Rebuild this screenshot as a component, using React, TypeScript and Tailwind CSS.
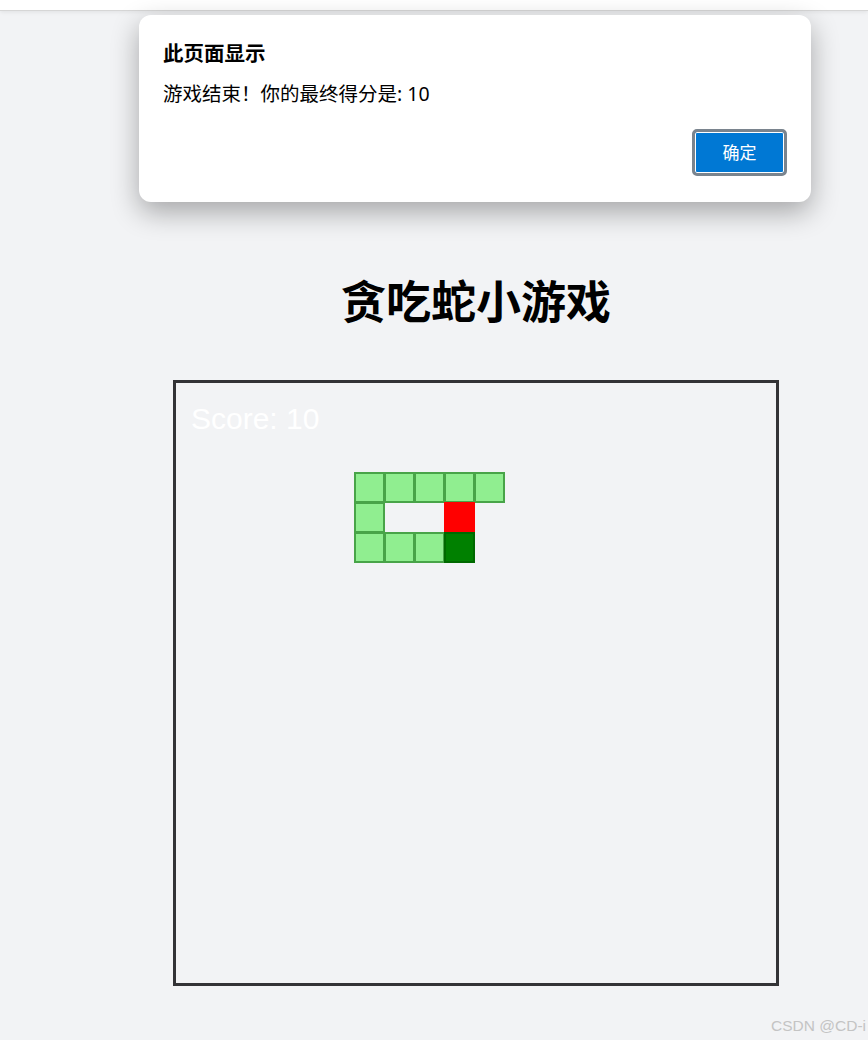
import React from "react";

type Cell = { x: number; y: number; kind: "body" | "head" | "food" };

const cells: Cell[] = [
  { x: 0, y: 0, kind: "body" },
  { x: 1, y: 0, kind: "body" },
  { x: 2, y: 0, kind: "body" },
  { x: 3, y: 0, kind: "body" },
  { x: 4, y: 0, kind: "body" },
  { x: 0, y: 1, kind: "body" },
  { x: 0, y: 2, kind: "body" },
  { x: 1, y: 2, kind: "body" },
  { x: 2, y: 2, kind: "body" },
  { x: 3, y: 1, kind: "food" },
  { x: 3, y: 2, kind: "head" },
];

export default function App() {
  return (
    <div
      className="relative h-[1040px] w-[868px] overflow-hidden bg-[#f2f3f5]"
      style={{ fontFamily: '"Noto Sans", "Noto Sans CJK SC", sans-serif' }}
    >
      {/* top browser strip */}
      <div className="h-[11px] bg-white border-b border-[#d6d6d6] shadow-[0_1px_4px_rgba(0,0,0,0.08)]" />

      {/* page content */}
      <div className="ml-[173px] flex w-[606px] flex-col items-center pt-[259px]">
        <h1
          className="text-[45px] font-bold leading-[60px] text-black"
          style={{ fontFamily: '"Noto Sans CJK SC", sans-serif' }}
        >
          贪吃蛇小游戏
        </h1>
        <div className="mt-[50px] h-[606px] w-[606px] border-[3px] border-[#333336]">
          <div className="relative h-full w-full">
            <div
              className="absolute left-[15px] top-[18px] text-[30px] leading-[36px] text-white"
              style={{ fontFamily: '"Liberation Sans", Arial, sans-serif' }}
            >
              Score: 10
            </div>
            {cells.map((c, i) => {
              const cls =
                c.kind === "food"
                  ? "bg-[#ff0000]"
                  : c.kind === "head"
                  ? "bg-[#008000] border-2 border-[rgba(0,90,0,0.6)]"
                  : "bg-[#90ee90] border-2 border-[rgba(0,90,0,0.5)]";
              return (
                <div
                  key={i}
                  className={`absolute h-[31px] w-[31px] ${cls}`}
                  style={{ left: 178 + c.x * 30, top: 89 + c.y * 30 }}
                />
              );
            })}
          </div>
        </div>
      </div>

      {/* watermark */}
      <div
        className="absolute right-[2px] top-[1015px] whitespace-nowrap text-[15.5px] leading-[22px] text-[#c4c4c4]"
        style={{ fontFamily: '"Liberation Sans", Arial, sans-serif' }}
      >
        CSDN @CD-i
      </div>

      {/* alert dialog */}
      <div className="absolute left-[139px] top-[15px] h-[187px] w-[672px] rounded-[12px] bg-white px-[24px] pt-[25px] shadow-[0_10px_28px_rgba(0,0,0,0.32)]">
        <div className="text-[20.5px] font-bold leading-[26px] text-black">此页面显示</div>
        <div className="mt-[15px] text-[19.5px] leading-[26px] text-black">
          游戏结束！你的最终得分是: 10
        </div>
        <div className="mt-[22px] flex justify-end">
          <button className="h-[47px] w-[95px] rounded-[5px] border-[3px] border-[#7a848e] bg-[#0078d4] text-[17px] text-white shadow-[inset_0_0_0_1px_#ffffff]">
            确定
          </button>
        </div>
      </div>
    </div>
  );
}
